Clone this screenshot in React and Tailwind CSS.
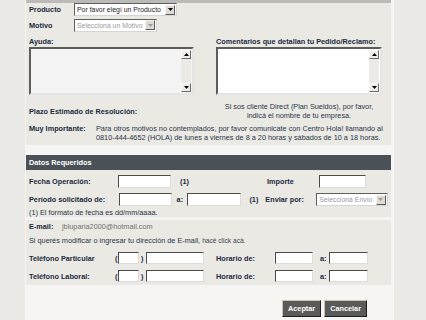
import React from 'react';

const lbl = "font-bold text-[#1a2a40] whitespace-nowrap";
const txt = "text-[#27344a] whitespace-nowrap";

const Arrow = ({ up = false, color = "#000" }) => (
  <svg width="5" height="3" viewBox="0 0 5 3">
    <polygon points={up ? "0,3 5,3 2.5,0" : "0,0 5,0 2.5,3"} fill={color} />
  </svg>
);

const Select = ({ w, text, disabled = false }) => (
  <div className={`flex items-center h-[13px] bg-white border border-t-[#5e5e5e] border-l-[#5e5e5e] border-b-[#d6d6d6] border-r-[#d6d6d6] ${w}`}>
    <span className={`flex-1 pl-[2px] overflow-hidden whitespace-nowrap text-[6.9px] ${disabled ? 'text-[#9a9a9a]' : 'text-[#1d1d1d]'}`}>{text}</span>
    <div className="flex items-center justify-center w-[10px] h-[10px] mr-[1px] bg-[#dedbd4] border border-t-[#f4f4f4] border-l-[#f4f4f4] border-b-[#5a5a5a] border-r-[#5a5a5a]">
      <Arrow color={disabled ? "#9a9a9a" : "#000"} />
    </div>
  </div>
);

const Input = ({ w, h = "h-[13px]" }) => (
  <div className={`bg-white border border-t-[#4a4a4a] border-l-[#4a4a4a] border-b-[#dcdcdc] border-r-[#dcdcdc] ${w} ${h}`} />
);

const ScrollBtn = ({ up }) => (
  <div className="flex items-center justify-center h-[9px] bg-[#eeedea] border border-t-[#fafafa] border-l-[#fafafa] border-b-[#6a6a6a] border-r-[#6a6a6a]">
    <Arrow up={up} />
  </div>
);

const TextArea = ({ bg }) => (
  <div className={`flex h-[48px] border-2 border-t-[#5c5c5c] border-l-[#5c5c5c] border-b-[#e4e4e4] border-r-[#e4e4e4] ${bg}`}>
    <div className="flex-1" />
    <div className="flex flex-col w-[10px] mr-[1px] my-[1px] bg-[#ebeae6]">
      <ScrollBtn up />
      <div className="flex-1" />
      <ScrollBtn />
    </div>
  </div>
);

const Button = ({ children }) => (
  <button className="h-[17px] px-[5px] bg-[#5a5a58] text-white font-bold border border-t-[#cdc4b2] border-l-[#cdc4b2] border-b-[#1e1e1e] border-r-[#1e1e1e]">
    {children}
  </button>
);

export default function App() {
  return (
    <div
      className="flex w-[426px] h-[320px] overflow-hidden bg-[#ebe9e5] text-[7.3px] leading-[9px]"
      style={{ fontFamily: '"Liberation Sans", Arial, sans-serif' }}
    >
      <div className="w-[25px] shrink-0" />

      <div className="flex flex-col w-[366px] shrink-0 bg-[#f6f5f3] border-l border-[#f6f5f3]">
        <div className="h-[3px] bg-[#bcbab6]" />

        {/* Producto / motivo / comentarios */}
        <div className="flex flex-col px-[3px] pb-[3px] bg-[#ebe9e4]">
          <div className="flex items-center h-[13px]">
            <span className={`${lbl} w-[45px]`}>Producto</span>
            <Select w="w-[103px]" text="Por favor elegí un Producto" />
          </div>
          <div className="flex items-center h-[12px] mt-[3px]">
            <span className={`${lbl} w-[45px]`}>Motivo</span>
            <Select w="w-[83px] h-[12px]" text="Seleccioná un Motivo" disabled />
          </div>

          <div className="flex mt-[6px] gap-[22px]">
            <div className="flex flex-col w-[165px]">
              <span className={`${lbl} h-[10px]`}>Ayuda:</span>
              <TextArea bg="bg-[#f3f3f3]" />
            </div>
            <div className="flex flex-col w-[166px]">
              <span className={`${lbl} h-[10px]`}>Comentarios que detallan tu Pedido/Reclamo:</span>
              <TextArea bg="bg-white" />
            </div>
          </div>

          <div className="flex items-center mt-[7px] gap-[22px]">
            <span className={`${lbl} w-[165px]`}>Plazo Estimado de Resolución:</span>
            <div className={`${txt} w-[166px] text-center`}>
              <div>Si sos cliente Direct (Plan Sueldos), por favor,</div>
              <div>indicá el nombre de tu empresa.</div>
            </div>
          </div>

          <div className="flex mt-[4px]">
            <span className={`${lbl} w-[67px]`}>Muy Importante:</span>
            <div className={txt}>
              <div>Para otros motivos no contemplados, por favor comunicate con Centro Hola! llamando al</div>
              <div>0810-444-4652 (HOLA) de lunes a viernes de 8 a 20 horas y sábados de 10 a 18 horas.</div>
            </div>
          </div>
        </div>

        <div className="h-[10px]" />

        <div className="flex items-center h-[15px] px-[3px] bg-[#4a5258] text-white font-bold">Datos Requeridos</div>

        {/* Fechas */}
        <div className="flex flex-col px-[3px] pt-[5px] bg-[#ebe9e4]">
          <div className="flex items-center h-[13px]">
            <span className={`${lbl} w-[89px]`}>Fecha Operación:</span>
            <Input w="w-[53px]" />
            <span className={`${lbl} w-[87px] ml-[9px]`}>(1)</span>
            <span className={`${lbl} w-[52px]`}>Importe</span>
            <Input w="w-[47px]" />
          </div>
          <div className="flex items-center h-[13px] mt-[5px]">
            <span className={`${lbl} w-[90px]`}>Período solicitado de:</span>
            <Input w="w-[53px]" />
            <span className={`${lbl} w-[10px] ml-[5px]`}>a:</span>
            <Input w="w-[55px]" />
            <span className={`${lbl} w-[16px] ml-[8px]`}>(1)</span>
            <span className={`${lbl} w-[51px]`}>Enviar por:</span>
            <Select w="w-[72px]" text="Seleccioná Envío" disabled />
          </div>
          <div className={`${txt} h-[9px] mt-[2px]`}>(1) El formato de fecha es dd/mm/aaaa.</div>
        </div>

        <div className="h-[3px]" />

        {/* E-mail y teléfonos */}
        <div className="flex flex-col px-[3px] pt-[2px] pb-[3px] bg-[#ebe9e4]">
          <div className="flex items-center h-[9px]">
            <span className={`${lbl} w-[33px]`}>E-mail:</span>
            <span className="text-[#707070]">jbluparia2000@hotmail.com</span>
          </div>
          <div className={`${txt} h-[9px] mt-[5px]`}>
            Si querés modificar o ingresar tu dirección de E-mail, <span className="text-[6.6px] text-[#3c4450]">hacé click acá.</span>
          </div>
          <div className="flex items-center h-[12px] mt-[7px]">
            <span className={`${lbl} w-[86px]`}>Teléfono Particular</span>
            <span className={`${lbl} w-[3px]`}>(</span>
            <Input w="w-[21px]" h="h-[12px]" />
            <span className={`${lbl} w-[7px] pl-[2px]`}>)</span>
            <Input w="w-[58px]" h="h-[12px]" />
            <span className={`${lbl} w-[59px] ml-[12px]`}>Horario de:</span>
            <Input w="w-[38px]" h="h-[12px]" />
            <span className={`${lbl} w-[9px] ml-[7px]`}>a:</span>
            <Input w="w-[39px]" h="h-[12px]" />
          </div>
          <div className="flex items-center h-[12px] mt-[6px]">
            <span className={`${lbl} w-[86px]`}>Teléfono Laboral:</span>
            <span className={`${lbl} w-[3px]`}>(</span>
            <Input w="w-[21px]" h="h-[12px]" />
            <span className={`${lbl} w-[7px] pl-[2px]`}>)</span>
            <Input w="w-[58px]" h="h-[12px]" />
            <span className={`${lbl} w-[59px] ml-[12px]`}>Horario de:</span>
            <Input w="w-[38px]" h="h-[12px]" />
            <span className={`${lbl} w-[9px] ml-[7px]`}>a:</span>
            <Input w="w-[39px]" h="h-[12px]" />
          </div>
        </div>

        <div className="flex justify-end gap-[3px] pt-[15px] pr-[24px]">
          <Button>Aceptar</Button>
          <Button>Cancelar</Button>
        </div>
      </div>

      <div className="w-[3px] shrink-0 bg-[#f6f5f3]" />
      <div className="flex-1" />
    </div>
  );
}
